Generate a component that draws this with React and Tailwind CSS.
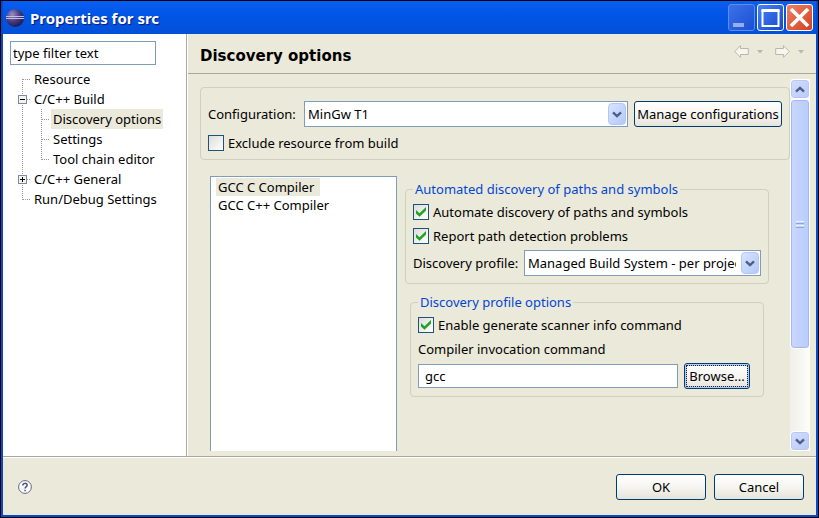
import { useState } from 'react'
import clsx from 'clsx'

const TREE = [
  { label: 'Resource', depth: 0, first: true },
  { label: 'C/C++ Build', depth: 0, toggle: 'minus' },
  { label: 'Discovery options', depth: 1 },
  { label: 'Settings', depth: 1 },
  { label: 'Tool chain editor', depth: 1, last: true },
  { label: 'C/C++ General', depth: 0, toggle: 'plus' },
  { label: 'Run/Debug Settings', depth: 0, last: true },
]

const COMPILERS = ['GCC C Compiler', 'GCC C++ Compiler']

// dotted connector cell in front of a tree item
function Gutter({ from = 0, to = 20, branch = true, toggle }) {
  return (
    <svg width="19" height="20" viewBox="0 0 19 20" shapeRendering="crispEdges" className="shrink-0">
      <g stroke="#9a9a9a" strokeDasharray="1 1">
        <path d={`M9.5 ${from}V${to}`} />
        {branch && <path d="M10 10.5H18" />}
      </g>
      {toggle && (
        <g stroke="#000">
          <rect x="5.5" y="6.5" width="8" height="8" fill="#f4f3ee" stroke="#7b8b9d" />
          <path d="M7 10.5H12" />
          {toggle === 'plus' && <path d="M9.5 8V13" />}
        </g>
      )}
    </svg>
  )
}

function TreeItem({ item, selected, onSelect }) {
  return (
    <li className="flex h-5 items-center">
      {item.depth === 1 && <Gutter branch={false} />}
      <Gutter from={item.first ? 10 : 0} to={item.last ? 11 : 20} toggle={item.toggle} />
      <button
        type="button"
        onClick={onSelect}
        className={clsx('h-5 px-0.5 whitespace-nowrap', selected && 'bg-[#ebe9da]')}
      >
        {item.label}
      </button>
    </li>
  )
}

function Chevron({ up }) {
  return (
    <svg width="10" height="7" viewBox="0 0 10 7" fill="none" stroke="#4a6186" strokeWidth="2.4">
      <path d={up ? 'M1 5.6L5 1.8L9 5.6' : 'M1 1.4L5 5.2L9 1.4'} />
    </svg>
  )
}

function Select({ id, value, className }) {
  return (
    <div className={clsx('relative h-[26px] min-w-0', className)}>
      <select
        id={id}
        defaultValue={value}
        className="h-full w-full appearance-none border border-[#7f9db9] bg-white pr-6 pl-[3px] outline-none"
      >
        <option>{value}</option>
      </select>
      <span className="pointer-events-none absolute inset-y-0.5 right-0.5 flex w-[18px] items-center justify-center rounded-sm border border-[#b4c6f4] bg-linear-to-br from-[#d8e3fe] to-[#b4c8f8]">
        <Chevron />
      </span>
    </div>
  )
}

function Checkbox({ label, checked = false }) {
  return (
    <label className="flex h-5 items-center gap-1">
      <span className="relative h-4 w-4 shrink-0">
        <input
          type="checkbox"
          defaultChecked={checked}
          className="peer block h-4 w-4 appearance-none border border-[#1c5180] bg-linear-to-br from-[#dcdcd7] to-white"
        />
        <svg
          viewBox="0 0 16 16"
          className="pointer-events-none absolute inset-0 hidden h-4 w-4 peer-checked:block"
          fill="#21a121"
        >
          <path d="M3 6L6.5 9.2L13 3V6.6L6.5 12.8L3 9.6Z" />
        </svg>
      </span>
      {label}
    </label>
  )
}

function Button({ children, className }) {
  return (
    <button
      type="button"
      className={clsx(
        'shrink-0 rounded-[3px] border border-[#003c74] bg-linear-to-b from-white via-[#f6f5f1] to-[#e6e3d9] whitespace-nowrap',
        className,
      )}
    >
      {children}
    </button>
  )
}

function Group({ title, children, className }) {
  return (
    <fieldset className={clsx('min-w-0 rounded border border-[#d0d0bf] px-[7px] pb-[7px]', className)}>
      <legend className="px-0.5 text-[#0046d5]">{title}</legend>
      {children}
    </fieldset>
  )
}

function TitleBar() {
  return (
    <header className="flex h-[33px] items-center bg-linear-to-b from-[#0a5df0] via-[#0055e5] to-[#0450d8] pr-[3px] pl-[3px]">
      <svg width="18" height="18" viewBox="0 0 18 18">
        <defs>
          <radialGradient id="globe" cx="35%" cy="30%" r="75%">
            <stop offset="0" stopColor="#9a90c4" />
            <stop offset="0.5" stopColor="#4b3f86" />
            <stop offset="1" stopColor="#1d1648" />
          </radialGradient>
        </defs>
        <circle cx="9" cy="9" r="9" fill="url(#globe)" />
        <path d="M0 7.5H18M0 9.5H18" stroke="#c3bfe4" />
      </svg>
      <h1 className="ml-1.5 flex-1 text-[15px] font-bold text-white [text-shadow:1px_1px_1px_#0a1883]">
        Properties for src
      </h1>
      <div className="flex gap-0.5">
        <button type="button" aria-label="Minimize" className="h-[27px] w-[27px] rounded-[3px] border border-[#5f8cee] bg-linear-to-br from-[#3a72ea] to-[#1c4fd0]">
          <svg viewBox="0 0 25 25"><path d="M4 18H15V22H4Z" fill="#94aef4" /></svg>
        </button>
        <button type="button" aria-label="Maximize" className="h-[27px] w-[27px] rounded-[3px] border border-white bg-linear-to-br from-[#4a80f2] to-[#1448cf]">
          <svg viewBox="0 0 25 25" fill="none" stroke="#fff">
            <path d="M4.5 5V21H20.5V5" strokeWidth="2" />
            <path d="M3.5 5.5H21.5" strokeWidth="3" />
          </svg>
        </button>
        <button type="button" aria-label="Close" className="h-[27px] w-[27px] rounded-[3px] border border-white bg-linear-to-br from-[#ec8063] to-[#d2401a]">
          <svg viewBox="0 0 25 25" stroke="#fff" strokeWidth="3.6"><path d="M4 4L21 21M21 4L4 21" /></svg>
        </button>
      </div>
    </header>
  )
}

function NavArrow({ label, forward }) {
  return (
    <button type="button" aria-label={label} className="flex items-center gap-2">
      <svg width="15" height="13" viewBox="0 0 15 13" fill="#f6f5ee" stroke="#b9b7a8" strokeLinejoin="round">
        <path d={forward ? 'M14.3 6.5L8.5 .7V3.5H.7V9.5H8.5V12.3Z' : 'M.7 6.5L6.5 .7V3.5H14.3V9.5H6.5V12.3Z'} />
      </svg>
      <svg width="6" height="4" viewBox="0 0 6 4" fill="#b9b7a8">
        <path d="M0 0H6L3 3.5Z" />
      </svg>
    </button>
  )
}

function ScrollBar() {
  return (
    <div className="flex w-5 shrink-0 flex-col bg-linear-to-r from-[#f0efe8] to-[#fdfdfa]">
      <button type="button" aria-label="Scroll up" className="flex h-5 items-center justify-center rounded-sm border border-white bg-linear-to-br from-[#d3defd] to-[#b8cafa] shadow-[inset_0_0_0_1px_#b6c8f5]">
        <Chevron up />
      </button>
      <div className="flex h-[250px] flex-col items-center justify-center gap-px rounded-sm border border-white bg-linear-to-r from-[#c9d7ff] to-[#b9ccfb] shadow-[inset_0_0_0_1px_#a3b9ee]">
        <span className="h-px w-2 bg-[#eef3ff]" />
        <span className="h-px w-2 bg-[#8ca6e4]" />
        <span className="h-px w-2 bg-[#eef3ff]" />
        <span className="h-px w-2 bg-[#8ca6e4]" />
      </div>
      <button type="button" aria-label="Scroll down" className="mt-auto flex h-5 items-center justify-center rounded-sm border border-white bg-linear-to-br from-[#d3defd] to-[#b8cafa] shadow-[inset_0_0_0_1px_#b6c8f5]">
        <Chevron />
      </button>
    </div>
  )
}

function Sidebar() {
  const [selected, setSelected] = useState('Discovery options')

  return (
    <aside className="w-[184px] shrink-0 border-r border-[#aca899] bg-white pt-[7px]">
      <input
        type="text"
        aria-label="Filter"
        defaultValue="type filter text"
        className="ml-[7px] block h-6 w-[146px] border border-[#7f9db9] px-0.5 outline-none"
      />
      <ul className="mt-1 pl-2.5">
        {TREE.map((item) => (
          <TreeItem
            key={item.label}
            item={item}
            selected={item.label === selected}
            onSelect={() => setSelected(item.label)}
          />
        ))}
      </ul>
    </aside>
  )
}

function DiscoveryPage() {
  const [compiler, setCompiler] = useState(COMPILERS[0])

  return (
    <div className="flex min-h-0 flex-1 pr-1.5 pl-3">
      <div className="flex min-w-0 flex-1 flex-col pt-[13px]">
        <section className="rounded border border-[#d0d0bf] px-[7px] pt-[13px] pb-1.5">
          <div className="flex items-center">
            <label htmlFor="configuration" className="w-24 shrink-0">Configuration:</label>
            <Select id="configuration" value="MinGw T1" className="mr-1.5 flex-1" />
            <Button className="h-[26px] w-[148px]">Manage configurations</Button>
          </div>
          <div className="mt-1.5">
            <Checkbox label="Exclude resource from build" />
          </div>
        </section>

        <div className="mt-4 flex flex-1 gap-2 pr-[21px] pl-2.5">
          <ul role="listbox" aria-label="Tools" className="mb-[5px] flex-1 border border-b-0 border-[#7f9db9] bg-white px-[5px] py-px">
            {COMPILERS.map((name) => (
              <li
                key={name}
                role="option"
                aria-selected={name === compiler}
                onClick={() => setCompiler(name)}
                className={clsx('h-[18px] w-fit pr-1.5 pl-0.5 leading-[18px]', name === compiler && 'bg-[#ebe9da]')}
              >
                {name}
              </li>
            ))}
          </ul>

          <div className="flex w-[364px] shrink-0 flex-col gap-2 pt-[3px]">
            <Group title="Automated discovery of paths and symbols">
              <div className="flex flex-col gap-1 pt-[3px]">
                <Checkbox label="Automate discovery of paths and symbols" checked />
                <Checkbox label="Report path detection problems" checked />
                <div className="flex items-center">
                  <label htmlFor="profile" className="w-[111px] shrink-0 whitespace-nowrap">Discovery profile:</label>
                  <Select id="profile" value="Managed Build System - per project scanner info profile" className="flex-1" />
                </div>
              </div>
            </Group>

            <Group title="Discovery profile options" className="mx-[5px]">
              <div className="flex flex-col gap-1 pt-[3px]">
                <Checkbox label="Enable generate scanner info command" checked />
                <label htmlFor="command">Compiler invocation command</label>
                <div className="flex items-center gap-1.5 pr-1.5">
                  <input
                    id="command"
                    type="text"
                    defaultValue="gcc"
                    className="h-6 min-w-0 flex-1 border border-[#7f9db9] bg-white px-1.5 outline-none"
                  />
                  <Button className="h-[26px] w-[66px] shadow-[inset_0_0_0_2px_#b3cbf5] outline-1 -outline-offset-3 outline-dotted outline-[#222]">
                    Browse...
                  </Button>
                </div>
              </div>
            </Group>
          </div>
        </div>
      </div>
      <div className="flex pt-[5px] pb-[5px]">
        <ScrollBar />
      </div>
    </div>
  )
}

function App() {
  return (
    <div className="flex min-h-screen flex-col border border-black bg-[#0a47c9] pr-0.5 pb-0.5 pl-0.5 font-['Noto_Sans',sans-serif] text-[13px] leading-5 text-black">
      <TitleBar />
      <div className="flex flex-1 flex-col bg-[#ebe9d9]">
        <div className="flex flex-1 border-b border-[#aca899]">
          <Sidebar />
          <main className="flex min-w-0 flex-1 flex-col border-l border-white">
            <div className="flex h-10 items-center justify-between border-b border-[#aca899] pr-3 pl-3">
              <h2 className="pt-1 font-['DejaVu_Sans',sans-serif] text-[15px] font-bold">Discovery options</h2>
              <div className="flex gap-3 pb-1">
                <NavArrow label="Back" />
                <NavArrow label="Forward" forward />
              </div>
            </div>
            <DiscoveryPage />
          </main>
        </div>
        <footer className="flex h-[58px] items-center justify-between border-t border-white pr-3 pl-[15px]">
          <button type="button" aria-label="Help">
            <svg width="14" height="14" viewBox="0 0 14 14" fill="none">
              <circle cx="7" cy="7" r="6.4" fill="#fbfbfb" stroke="#66698a" />
              <path d="M4.8 5.6C4.8 2.6 9.3 2.8 9.2 5.2C9.1 6.6 7.1 6.6 7.1 8.6M7.1 9.8V11.3" stroke="#4c5078" strokeWidth="1.5" />
            </svg>
          </button>
          <div className="flex gap-2">
            <Button className="h-[26px] w-[90px]">OK</Button>
            <Button className="h-[26px] w-[90px]">Cancel</Button>
          </div>
        </footer>
      </div>
    </div>
  )
}

export default App
